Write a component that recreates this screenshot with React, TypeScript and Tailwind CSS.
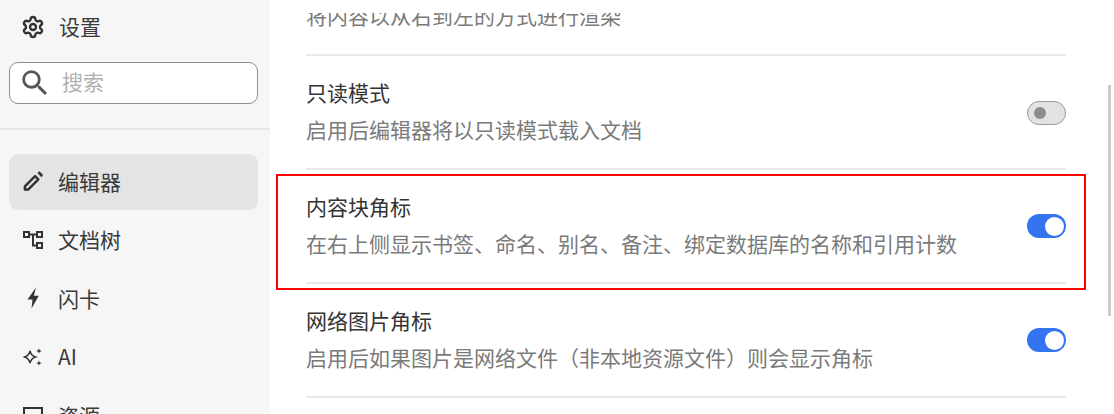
import { Settings } from "lucide-react";
import { MdSearch } from "react-icons/md";

const font = "font-['Noto_Sans_CJK_SC','Noto_Sans',sans-serif]";

function PencilIcon() {
  return (
    <svg width="21" height="21" viewBox="0 0 21 21" fill="none">
      <path d="M2 19V15.600L12.700 4.900L16.100 8.300L5.400 19Z" stroke="#333" strokeWidth="2.600" strokeLinejoin="round" />
      <path d="M15 1.700L16.300 .5C16.800 0 17.500 0 18 .5L20.500 3C21 3.500 21 4.200 20.500 4.700L19.300 6Z" fill="#333" />
    </svg>
  );
}

function TreeIcon() {
  return (
    <svg width="20" height="18" viewBox="0 0 20 18" fill="none" stroke="#333" strokeWidth="2">
      <rect x="1" y="1" width="5" height="5" />
      <rect x="14" y="1" width="5" height="5" />
      <rect x="14" y="12" width="5" height="5" />
      <path d="M6 3.500h8M10 3.500v11h4" />
    </svg>
  );
}

function SparkIcon() {
  return (
    <svg width="20" height="18" viewBox="0 0 20 18" fill="#333">
      <path
        d="M7 2.800c.6 3 1.700 5 5.500 6.200-3.800 1.200-4.900 3.200-5.500 6.200-.6-3-1.700-5-5.500-6.200 3.800-1.200 4.900-3.200 5.500-6.200z"
        fill="none"
        stroke="#333"
        strokeWidth="1.500"
      />
      <path d="M16 0c.3 1.800.8 2.400 2.800 2.900-2 .5-2.500 1.100-2.800 2.900-.3-1.800-.8-2.400-2.800-2.900 2-.5 2.500-1.100 2.800-2.900zM16 12.200c.3 1.800.8 2.400 2.800 2.900-2 .5-2.500 1.100-2.800 2.900-.3-1.800-.8-2.400-2.800-2.900 2-.5 2.500-1.100 2.800-2.900z" />
    </svg>
  );
}

function BoltIcon() {
  return (
    <svg width="12" height="22" viewBox="0 0 12 22" fill="#333">
      <path d="M9 0.500L0.500 12.500H5.500L4.500 21.500L11.800 8.800H6.800Z" />
    </svg>
  );
}

function NavItem({ icon, label, active }: { icon: React.ReactNode; label: string; active?: boolean }) {
  return (
    <div className={`mb-[2.5px] flex h-[56px] items-center rounded-[9px] pb-[2px] pl-[14px] ${active ? "bg-[#e4e4e4]" : ""}`}>
      <span className="flex w-[20px] shrink-0 items-center justify-center">{icon}</span>
      <span className="ml-[15px] text-[21px] leading-none text-[#3a3a3a]">{label}</span>
    </div>
  );
}

function Row({ title, desc, on }: { title: string; desc: string; on: boolean }) {
  return (
    <div className="flex h-[114px] items-center justify-between border-b-2 border-[#e9e9e9] pb-[2px]">
      <div>
        <div className="text-[21px] leading-[34px] text-[#333]">{title}</div>
        <div className="mt-[2px] text-[21px] leading-[36px] text-[#7a7a7a]">{desc}</div>
      </div>
      {on ? (
        <div className="mt-[2px] flex h-[24px] w-[39px] items-center justify-end rounded-full bg-[#3574f0] pr-[2px]">
          <div className="h-[19px] w-[19px] rounded-full bg-white" />
        </div>
      ) : (
        <div className="mt-[4px] flex h-[24px] w-[39px] items-center rounded-full border border-[#9a9a9a] bg-[#e2e3e1] pl-[6px]">
          <div className="h-[12px] w-[12px] rounded-full bg-[#8a8c8e]" />
        </div>
      )}
    </div>
  );
}

export default function App() {
  return (
    <div className={`relative flex h-[414px] w-[1114px] overflow-hidden bg-white ${font}`}>
      {/* sidebar */}
      <div className="h-[414px] w-[270px] shrink-0 overflow-hidden bg-[#f6f6f6]">
        <div className="flex h-[54px] items-center pl-[21px]">
          <Settings size={24} color="#333" strokeWidth={2.400} />
          <span className="mb-[2px] ml-[14px] text-[21px] leading-none text-[#3a3a3a]">设置</span>
        </div>
        <div className="ml-[9px] mr-[12px] mt-[8px] flex h-[42px] items-center rounded-[9px] border border-[#8f8f8f] bg-white pl-[8px]">
          <MdSearch size={34} color="#555" />
          <span className="mb-[4px] ml-[10px] text-[21px] leading-none text-[#b0b0b0]">搜索</span>
        </div>
        <div className="mt-[24px] h-[2px] bg-[#e6e6e6]" />
        <div className="ml-[9px] mr-[12px] mt-[24px]">
          <NavItem icon={<PencilIcon />} label="编辑器" active />
          <NavItem icon={<TreeIcon />} label="文档树" />
          <NavItem icon={<BoltIcon />} label="闪卡" />
          <NavItem icon={<SparkIcon />} label="AI" />
          <NavItem
            icon={<div className="h-[16px] w-[20px] border-2 border-[#333]" />}
            label="资源"
          />
        </div>
      </div>

      {/* settings list */}
      <div className="relative h-[414px] flex-1 overflow-hidden pl-[36px] pr-[48px]">
        <div className="-mt-[58px]">
          <Row title="从右到左" desc="将内容以从右到左的方式进行渲染" on={false} />
          <Row title="只读模式" desc="启用后编辑器将以只读模式载入文档" on={false} />
          <Row title="内容块角标" desc="在右上侧显示书签、命名、别名、备注、绑定数据库的名称和引用计数" on />
          <Row title="网络图片角标" desc="启用后如果图片是网络文件（非本地资源文件）则会显示角标" on />
        </div>
        {/* sticky top edge of the scroll area */}
        <div className="absolute inset-x-0 top-0 h-[13px] bg-white" />
      </div>

      {/* scrollbar */}
      <div className="absolute right-[3px] top-[85px] h-[231px] w-[3px] bg-[#cccccc]" />
      {/* annotation */}
      <div className="pointer-events-none absolute left-[276px] top-[174px] h-[116px] w-[810px] border-[2.5px] border-[#ff0000]" />
    </div>
  );
}
